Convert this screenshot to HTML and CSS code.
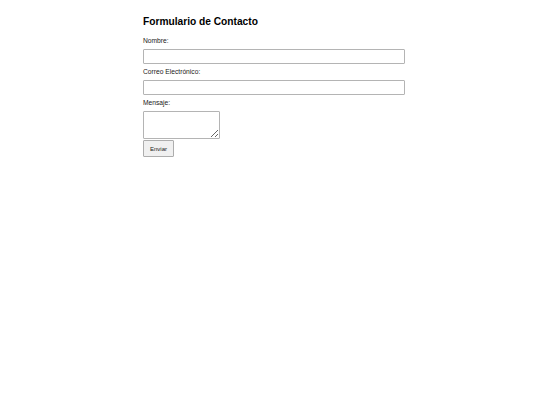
FILE: index.html
```html
<!DOCTYPE html>
<html lang="es">
<head>
<meta charset="utf-8">
<title>Formulario de Contacto</title>
<link rel="stylesheet" href="styles.css">
</head>
<body>
<div class="container">
  <h2 class="title">Formulario de Contacto</h2>
  <form class="form">
    <label class="label" for="nombre">Nombre:</label>
    <input class="field" type="text" id="nombre">
    <label class="label" for="correo">Correo Electrónico:</label>
    <input class="field" type="email" id="correo">
    <label class="label" for="mensaje">Mensaje:</label>
    <textarea class="area" id="mensaje"></textarea>
    <button class="btn" type="submit">Enviar</button>
  </form>
</div>
</body>
</html>
```

FILE: styles.css
```css
html, body {
  background: #ffffff;
}
body {
  margin: 8px;
  font-family: "Liberation Sans", Arial, sans-serif;
  color: #000;
}
.container {
  width: 254px;
  margin: 0 auto;
}
.title {
  font-size: 10.2px;
  font-weight: bold;
  margin: 8px 0 9px;
  line-height: 12px;
}
.form {
  display: flex;
  flex-direction: column;
  align-items: flex-start;
}
.label {
  font-size: 6.7px;
  line-height: 8px;
  margin-bottom: 4px;
  color: #1a1a1a;
}
.field {
  box-sizing: content-box;
  width: 100%;
  height: 9px;
  padding: 2px 3px;
  border: 1px solid #b4b4b4;
  border-radius: 1px;
  margin: 0 0 4px;
  font-size: 7px;
  font-family: inherit;
}
.area {
  box-sizing: border-box;
  width: 77px;
  height: 28px;
  border: 1px solid #b4b4b4;
  border-radius: 1px;
  margin: 0 0 1px;
  font-family: inherit;
  resize: both;
}
.btn {
  box-sizing: border-box;
  width: 31px;
  height: 17px;
  padding: 0;
  font-family: inherit;
  font-size: 6px;
  background: #f0f0f0;
  border: 1px solid #adadad;
  border-radius: 1px;
  color: #1a1a1a;
}
```
